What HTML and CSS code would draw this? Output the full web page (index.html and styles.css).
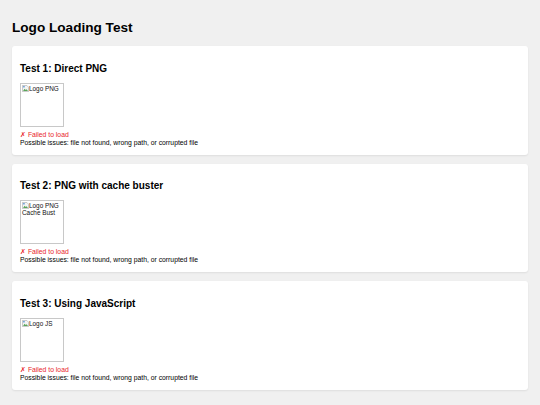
FILE: index.html
```html
<!DOCTYPE html>
<html>
<head>
<meta charset="utf-8">
<title>Logo Loading Test</title>
<link rel="stylesheet" href="styles.css">
</head>
<body>
<h1 class="title">Logo Loading Test</h1>

<section class="card">
  <h2 class="card-title">Test 1: Direct PNG</h2>
  <div class="broken-img">
    <svg class="broken-icon" viewBox="0 0 8 8" width="7" height="7"><path d="M0.5 0.5 H5.5 L7.5 2.5 V7.5 H0.5 Z" fill="#f4f4f4" stroke="#9a9a9a" stroke-width="0.6"/><path d="M1.2 6.8 L3 4.2 L4.3 5.6 L5.3 4.8 L6.8 6.8 Z" fill="#5aa55a"/><rect x="1.2" y="1.2" width="2" height="1.6" fill="#6b9fd8"/></svg><span class="alt">Logo PNG</span>
  </div>
  <div class="status">✗ Failed to load</div>
  <div class="hint">Possible issues: file not found, wrong path, or corrupted file</div>
</section>

<section class="card">
  <h2 class="card-title">Test 2: PNG with cache buster</h2>
  <div class="broken-img">
    <svg class="broken-icon" viewBox="0 0 8 8" width="7" height="7"><path d="M0.5 0.5 H5.5 L7.5 2.5 V7.5 H0.5 Z" fill="#f4f4f4" stroke="#9a9a9a" stroke-width="0.6"/><path d="M1.2 6.8 L3 4.2 L4.3 5.6 L5.3 4.8 L6.8 6.8 Z" fill="#5aa55a"/><rect x="1.2" y="1.2" width="2" height="1.6" fill="#6b9fd8"/></svg><span class="alt">Logo PNG Cache Bust</span>
  </div>
  <div class="status">✗ Failed to load</div>
  <div class="hint">Possible issues: file not found, wrong path, or corrupted file</div>
</section>

<section class="card">
  <h2 class="card-title">Test 3: Using JavaScript</h2>
  <div class="broken-img">
    <svg class="broken-icon" viewBox="0 0 8 8" width="7" height="7"><path d="M0.5 0.5 H5.5 L7.5 2.5 V7.5 H0.5 Z" fill="#f4f4f4" stroke="#9a9a9a" stroke-width="0.6"/><path d="M1.2 6.8 L3 4.2 L4.3 5.6 L5.3 4.8 L6.8 6.8 Z" fill="#5aa55a"/><rect x="1.2" y="1.2" width="2" height="1.6" fill="#6b9fd8"/></svg><span class="alt">Logo JS</span>
  </div>
  <div class="status">✗ Failed to load</div>
  <div class="hint">Possible issues: file not found, wrong path, or corrupted file</div>
</section>
</body>
</html>
```

FILE: styles.css
```css
html, body {
  margin: 0;
  padding: 0;
}
body {
  background: #f0f0f0;
  font-family: "Liberation Sans", Arial, sans-serif;
  color: #000;
  padding: 20px 12px 12px;
}
.title {
  font-size: 13.6px;
  font-weight: bold;
  margin: 0 0 11px;
  line-height: 15px;
}
.card {
  background: #fff;
  border-radius: 3px;
  box-shadow: 0 1px 2px rgba(0,0,0,0.08);
  padding: 8px;
  margin-bottom: 9px;
}
.card-title {
  font-size: 10px;
  font-weight: bold;
  margin: 8.6px 0 8px;
  line-height: 12px;
}
.broken-img {
  width: 44px;
  height: 44px;
  box-sizing: border-box;
  border: 1px solid #c8c8c8;
  font-size: 6.4px;
  line-height: 7.3px;
  color: #111;
  padding: 1px 0 0 1px;
  overflow: hidden;
}
.broken-icon {
  vertical-align: -1px;
}
.status {
  margin-top: 4px;
  font-size: 6.8px;
  line-height: 8px;
  color: #e8262b;
}
.hint {
  font-size: 6.8px;
  line-height: 8px;
}
```
